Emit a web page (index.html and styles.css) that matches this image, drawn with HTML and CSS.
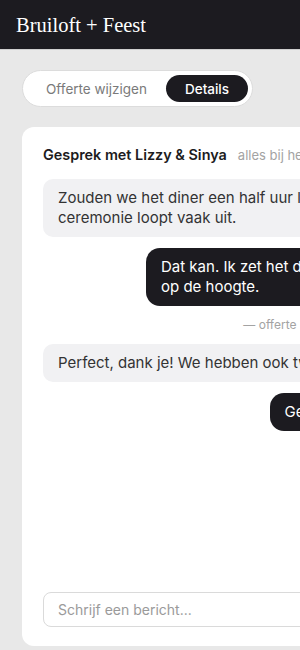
FILE: index.html
```html
<!DOCTYPE html>
<html lang="nl">
<head>
<meta charset="utf-8">
<title>Bruiloft + Feest</title>
<link rel="stylesheet" href="styles.css">
</head>
<body>
<header class="topbar">
  <h1 class="brand">Bruiloft + Feest</h1>
</header>
<main class="page">
  <nav class="toggle">
    <button class="toggle-btn">Offerte wijzigen</button>
    <button class="toggle-btn active">Details</button>
  </nav>
  <section class="card">
    <div class="card-head">
      <h2 class="card-title">Gesprek met Lizzy &amp; Sinya</h2>
      <span class="card-sub">alles bij het juiste team</span>
    </div>
    <div class="chat">
      <div class="msg in">Zouden we het diner een half uur later doen? De ceremonie loopt vaak uit.</div>
      <div class="msg out">Dat kan. Ik zet het direct door en houd jullie op de hoogte.</div>
      <div class="meta">— offerte bijgewerkt: diner start om 19:30 uur</div>
      <div class="msg in">Perfect, dank je! We hebben ook twee vegans.</div>
      <div class="msg out">Geweldig, dat nemen we op.</div>
    </div>
    <div class="composer">
      <input class="composer-input" type="text" placeholder="Schrijf een bericht...">
    </div>
  </section>
</main>
</body>
</html>
```
FILE: styles.css
```css
html, body {
  margin: 0;
  padding: 0;
  height: 650px;
  overflow: hidden;
}
body {
  background: #e8e8e8;
  font-family: Inter, "Noto Sans", sans-serif;
  color: #1c1b20;
}
.topbar {
  height: 49px;
  background: #1c1b20;
  border-bottom: 1px solid #cfcfcf;
  display: flex;
  align-items: center;
  padding-left: 16px;
}
.brand {
  margin: 0;
  font-family: "Liberation Serif", "DejaVu Serif", serif;
  font-weight: 400;
  font-size: 20.5px;
  color: #fff;
  padding-top: 2px;
}
.page {
  padding: 20px 0 0 22px;
  display: flex;
  flex-direction: column;
  gap: 20px;
}
.toggle {
  align-self: flex-start;
  display: flex;
  background: #fff;
  border: 1px solid #dcdcdc;
  border-radius: 999px;
  padding: 4px;
  height: 27px;
}
.toggle-btn {
  border: 0;
  background: transparent;
  font-family: inherit;
  font-size: 13.5px;
  color: #7a7a7a;
  padding: 0 19px;
  border-radius: 999px;
  cursor: pointer;
}
.toggle-btn.active {
  background: #1c1b20;
  color: #fff;
  font-weight: 500;
  padding: 0 19px;
}
.card {
  width: 500px;
  height: 519px;
  box-sizing: border-box;
  background: #fff;
  border-radius: 12px;
  padding: 19px 21px;
  display: flex;
  flex-direction: column;
}
.card-head {
  display: flex;
  align-items: baseline;
  gap: 11px;
  white-space: nowrap;
}
.card-title {
  margin: 0;
  font-size: 14.4px;
  font-weight: 600;
  color: #1c1b20;
}
.card-sub {
  font-size: 13px;
  color: #a3a3a3;
}
.chat {
  flex: 1;
  display: flex;
  flex-direction: column;
  gap: 11px;
  margin-top: 16px;
}
.msg {
  box-sizing: border-box;
  padding: 9px 15px;
  font-size: 15px;
  line-height: 20px;
}
.msg.in {
  max-width: 400px;
  align-self: flex-start;
  background: #f1f1f3;
  color: #333;
  border-radius: 10px;
}
.msg.out {
  max-width: 355px;
  align-self: flex-end;
  background: #1c1b20;
  color: #fff;
  border-radius: 14px;
}
.meta {
  align-self: flex-end;
  font-size: 12px;
  line-height: 16px;
  color: #a3a3a3;
}
.composer-input {
  width: 100%;
  box-sizing: border-box;
  height: 35px;
  border: 1px solid #dadada;
  border-radius: 8px;
  padding: 0 14px;
  font-family: inherit;
  font-size: 14px;
  color: #333;
  outline: none;
}
.composer-input::placeholder {
  color: #9a9a9a;
}
```
